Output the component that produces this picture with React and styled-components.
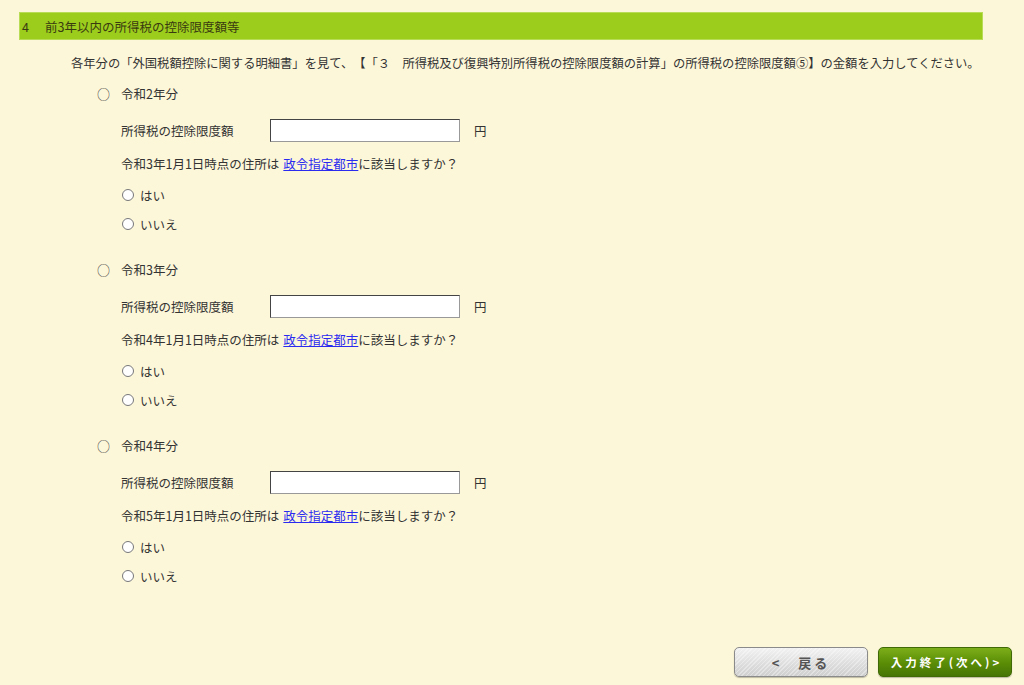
import React from 'react'
import styled, { createGlobalStyle } from 'styled-components'

const GlobalStyle = createGlobalStyle`
  html, body {
    margin: 0;
    padding: 0;
    background: #fdf7d9;
  }
  body {
    font-family: "Noto Sans CJK JP", "Liberation Sans", sans-serif;
    font-size: 12.5px;
    color: #333;
    text-spacing-trim: space-all;
  }
`

const Page = styled.div`
  width: 1024px;
  height: 685px;
  box-sizing: border-box;
  padding-top: 12px;
  display: flex;
  flex-direction: column;
  background: #fdf7d9;
`

const SectionBar = styled.div`
  margin-left: 19px;
  width: 964px;
  height: 28px;
  box-sizing: border-box;
  background: #9ccd1d;
  border: 1px solid #b9dc57;
  display: flex;
  align-items: center;
  padding-left: 2px;
  color: #3a3a10;
`

const SectionNo = styled.span`
  width: 23px;
`

const Lead = styled.p`
  margin: 13px 0 0 71px;
  font-size: 12.3px;
  line-height: 20px;
  white-space: nowrap;
`

const Years = styled.div`
  margin-left: 97px;
  margin-top: 10px;
  display: flex;
  flex-direction: column;
`

const YearBlock = styled.section`
  display: flex;
  flex-direction: column;
  & + & {
    margin-top: 25px;
  }
`

const YearTitle = styled.div`
  display: flex;
  align-items: center;
  height: 20px;
`

const Mark = styled.span`
  width: 24px;
  font-size: 13px;
  color: #444;
`

const Body = styled.div`
  margin-left: 24px;
  display: flex;
  flex-direction: column;
`

const AmountRow = styled.div`
  display: flex;
  align-items: center;
  height: 24px;
  margin-top: 15px;
`

const FieldLabel = styled.span`
  width: 149px;
`

const AmountInput = styled.input`
  width: 190px;
  height: 23px;
  box-sizing: border-box;
  border: 1px solid #444;
  border-right-color: #999;
  border-bottom-color: #999;
  background: #fff;
  margin: 0;
`

const Unit = styled.span`
  margin-left: 14px;
`

const Question = styled.div`
  height: 20px;
  line-height: 20px;
  margin-top: 12px;
`

const Link = styled.a`
  color: #2b2bf0;
  text-decoration: underline;
  margin-left: 4px;
`

const Choice = styled.label`
  display: flex;
  align-items: center;
  height: 20px;
  margin-top: ${p => (p.$first ? '11px' : '9px')};
`

const Radio = styled.input.attrs({ type: 'radio' })`
  width: 12px;
  height: 12px;
  margin: 0 6px 0 1px;
`

const Footer = styled.div`
  margin-top: auto;
  margin-bottom: 8px;
  display: flex;
  justify-content: flex-end;
  gap: 10px;
  padding-right: 12px;
`

const NavButton = styled.button`
  width: 134px;
  height: 30px;
  padding: 0;
  border-radius: 5px;
  font-family: "Noto Sans CJK JP", sans-serif;
  font-weight: bold;
  white-space: nowrap;
  cursor: pointer;
  box-shadow: 0 1px 1px rgba(0, 0, 0, 0.25);
  ${p =>
    p.$primary
      ? `
    color: #fff;
    font-size: 11.5px;
    letter-spacing: 3px;
    padding-left: 3px;
    border: 1px solid #3f6a05;
    background: linear-gradient(#7cae1a, #5a8c06 55%, #477505);
  `
      : `
    color: #555;
    font-size: 13px;
    letter-spacing: 3px;
    border: 1px solid #8a8a8a;
    background:
      repeating-linear-gradient(135deg, rgba(255,255,255,0.35) 0 1px, transparent 1px 3px),
      linear-gradient(#f2f2f2, #dcdcdc 60%, #cfcfcf);
  `}
`

const years = [
  { label: '令和2年分', date: '令和3年1月1日時点の住所は' },
  { label: '令和3年分', date: '令和4年1月1日時点の住所は' },
  { label: '令和4年分', date: '令和5年1月1日時点の住所は' }
]

const YearSection = ({ label, date, idx }) => (
  <YearBlock>
    <YearTitle>
      <Mark>○</Mark>
      {label}
    </YearTitle>
    <Body>
      <AmountRow>
        <FieldLabel>所得税の控除限度額</FieldLabel>
        <AmountInput type='text' />
        <Unit>円</Unit>
      </AmountRow>
      <Question>
        {date}
        <Link href='#'>政令指定都市</Link>に該当しますか？
      </Question>
      <Choice $first>
        <Radio name={'city' + idx} />
        はい
      </Choice>
      <Choice>
        <Radio name={'city' + idx} />
        いいえ
      </Choice>
    </Body>
  </YearBlock>
)

const App = () => (
  <Page>
    <GlobalStyle />
    <SectionBar>
      <SectionNo>4</SectionNo>
      前3年以内の所得税の控除限度額等
    </SectionBar>
    <Lead>
      各年分の「外国税額控除に関する明細書」を見て、【「３　所得税及び復興特別所得税の控除限度額の計算」の所得税の控除限度額⑤】の金額を入力してください。
    </Lead>
    <Years>
      {years.map((y, i) => (
        <YearSection key={y.label} {...y} idx={i} />
      ))}
    </Years>
    <Footer>
      <NavButton>&lt;　戻る</NavButton>
      <NavButton $primary>入力終了(次へ)&gt;</NavButton>
    </Footer>
  </Page>
)

export default App
